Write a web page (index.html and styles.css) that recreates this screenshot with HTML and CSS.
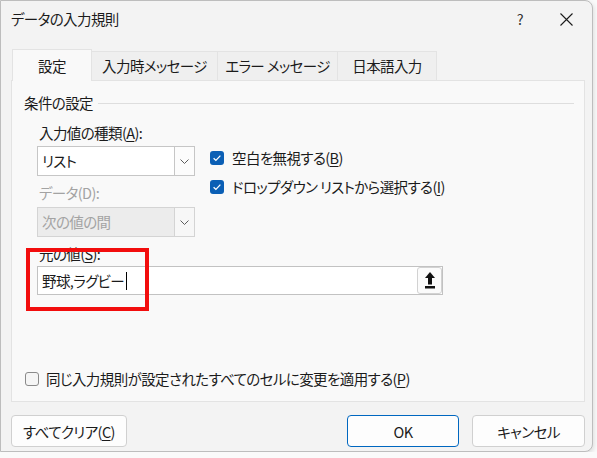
FILE: index.html
```html
<!DOCTYPE html>
<html lang="ja">
<head>
    <meta charset="UTF-8">
    <meta name="viewport" content="width=device-width, initial-scale=1.0">
    <title>データの入力規則</title>
    <link rel="stylesheet" href="styles.css">
</head>
<body>
    <div class="dialog">
        <div class="titlebar">
            <span class="title">データの入力規則</span>
            <span class="help">?</span>
            <span class="close">
                <svg width="13" height="13" viewBox="0 0 13 13"><path d="M0.5 0.5 L12.5 12.5 M12.5 0.5 L0.5 12.5" stroke="#1b1b1b" stroke-width="1.1" fill="none"/></svg>
            </span>
        </div>

        <div class="content">
            <div class="tabs">
                <div class="tab tab-settings active">設定</div>
                <div class="tab tab-input">入力時メッセージ</div>
                <div class="tab tab-error">エラー メッセージ</div>
                <div class="tab tab-ime">日本語入力</div>
            </div>

            <div class="panel">
                <div class="group-title">
                    <span>条件の設定</span>
                    <span class="rule"></span>
                </div>

                <div class="criteria">
                    <div class="label label-type">入力値の種類(<u>A</u>):</div>
                    <div class="criteria-row">
                        <div class="criteria-left">
                            <div class="combo">
                                <span class="combo-value">リスト</span>
                                <span class="combo-btn">
                                    <svg width="9" height="5" viewBox="0 0 9 5"><path d="M0.5 0.5 L4.5 4.5 L8.5 0.5" stroke="#5c5c5c" stroke-width="1" fill="none"/></svg>
                                </span>
                            </div>
                            <div class="label label-data disabled">データ(D):</div>
                            <div class="combo disabled">
                                <span class="combo-value">次の値の間</span>
                                <span class="combo-btn">
                                    <svg width="9" height="5" viewBox="0 0 9 5"><path d="M0.5 0.5 L4.5 4.5 L8.5 0.5" stroke="#5c5c5c" stroke-width="1" fill="none"/></svg>
                                </span>
                            </div>
                        </div>
                        <div class="options">
                            <div class="check">
                                <span class="box checked">
                                    <svg width="14" height="14" viewBox="0 0 14 14"><path d="M3.6 7.2 L5.9 9.4 L10.4 4.6" stroke="#fff" stroke-width="1.3" fill="none"/></svg>
                                </span>
                                <span>空白を無視する(<u>B</u>)</span>
                            </div>
                            <div class="check">
                                <span class="box checked">
                                    <svg width="14" height="14" viewBox="0 0 14 14"><path d="M3.6 7.2 L5.9 9.4 L10.4 4.6" stroke="#fff" stroke-width="1.3" fill="none"/></svg>
                                </span>
                                <span>ドロップダウン リストから選択する(<u>I</u>)</span>
                            </div>
                        </div>
                    </div>

                    <div class="label label-source">元の値(<u>S</u>):</div>
                    <div class="source">
                        <span class="source-text">野球,ラグビー</span><span class="caret"></span>
                        <span class="collapse-btn">
                            <svg width="10" height="17" viewBox="0 0 10 17">
                                <polygon points="5,0 10,6 0,6" fill="#111"/>
                                <rect x="3" y="5.5" width="4" height="7" fill="#111"/>
                                <rect x="0" y="14" width="10" height="2.5" fill="#111"/>
                            </svg>
                        </span>
                    </div>
                </div>

                <div class="check apply">
                    <span class="box"></span>
                    <span>同じ入力規則が設定されたすべてのセルに変更を適用する(<u>P</u>)</span>
                </div>
            </div>

            <div class="footer">
                <button type="button" class="btn btn-clear">すべてクリア(<u>C</u>)</button>
                <button type="button" class="btn btn-ok">OK</button>
                <button type="button" class="btn btn-cancel">キャンセル</button>
            </div>
        </div>

        <div class="highlight"></div>
    </div>
</body>
</html>
```

FILE: styles.css
```css
body {
    margin: 0;
    background-color: #fafafa;
    font-family: "Noto Sans CJK JP", "Noto Sans", sans-serif;
    font-feature-settings: "palt";
    font-size: 14.5px;
    letter-spacing: -0.6px;
    color: #1b1b1b;
    overflow: hidden;
}

u {
    text-decoration-thickness: 1px;
    text-underline-offset: 2px;
}

.dialog {
    position: relative;
    width: 593px;
    height: 452px;
    box-sizing: border-box;
    border: 1px solid #bdbdbd;
    border-radius: 0 8px 8px 0;
    background-color: #f3f3f3;
    box-shadow: 1px 2px 5px rgba(0, 0, 0, 0.12);
    display: flex;
    flex-direction: column;
}

/* title bar */
.titlebar {
    height: 36px;
    display: flex;
    align-items: center;
    padding-left: 10px;
    line-height: 20px;
}

.title {
    flex: 1;
}

.help {
    width: 46px;
    text-align: center;
    color: #333;
}

.close {
    width: 46px;
    margin-right: 3px;
    display: flex;
    justify-content: center;
}

.content {
    flex: 1;
    padding: 0 7px 0 10px;
    display: flex;
    flex-direction: column;
}

/* tabs */
.tabs {
    margin-top: 12px;
    margin-left: 1px;
    height: 31px;
    display: flex;
    align-items: flex-end;
}

.tab {
    height: 29px;
    box-sizing: border-box;
    border: 1px solid #e3e3e3;
    border-bottom: none;
    margin-left: -1px;
    background-color: #efefef;
    line-height: 27px;
    text-align: center;
    white-space: nowrap;
}

.tab.active {
    position: relative;
    z-index: 1;
    height: 32px;
    margin-left: 0;
    margin-bottom: -1px;
    background-color: #f9f9f9;
    line-height: 32px;
}

.tab-settings { width: 80px; }
.tab-input { width: 127px; }
.tab-error { width: 121px; }
.tab-ime { width: 100px; }

/* settings panel */
.panel {
    height: 322px;
    box-sizing: border-box;
    border: 1px solid #e3e3e3;
    background-color: #f9f9f9;
    padding: 12px 10px 12px 12px;
    display: flex;
    flex-direction: column;
}

.group-title {
    display: flex;
    align-items: center;
    line-height: 20px;
}

.rule {
    flex: 1;
    height: 1px;
    margin-left: 5px;
    background-color: #dedede;
}

.criteria {
    margin-left: 13px;
}

.label {
    line-height: 20px;
    padding-left: 2px;
}

.label.disabled {
    color: #a3a3a3;
}

.label-type {
    margin-top: 10px;
    margin-bottom: 3px;
}

.label-data {
    margin-top: 7px;
    margin-bottom: 4px;
}

.label-source {
    margin-top: 7px;
    margin-bottom: 2px;
}

.criteria-row {
    display: flex;
}

.criteria-left {
    width: 158px;
}

.combo {
    height: 30px;
    box-sizing: border-box;
    border: 1px solid #c6c6c6;
    background-color: #fff;
    display: flex;
}

.combo-value {
    flex: 1;
    padding-left: 4px;
    line-height: 28px;
}

.combo-btn {
    width: 19px;
    border-left: 1px solid #c6c6c6;
    background-color: #fcfcfc;
    display: flex;
    align-items: center;
    justify-content: center;
}

.combo.disabled {
    border-color: #d4d4d4;
    background-color: #ececec;
    color: #a3a3a3;
}

.combo.disabled .combo-btn {
    border-left-color: #d4d4d4;
    background-color: #f7f7f7;
}

.options {
    margin-left: 15px;
    padding-top: 2px;
    display: flex;
    flex-direction: column;
    gap: 9px;
}

.check {
    display: flex;
    align-items: center;
    gap: 8px;
    line-height: 20px;
    white-space: nowrap;
}

.box {
    width: 14px;
    height: 14px;
    box-sizing: border-box;
    border: 1px solid #8a8a8a;
    border-radius: 3px;
    background-color: #f5f5f5;
    display: flex;
}

.box.checked {
    border: none;
    background-color: #0b5fb5;
}

.source {
    width: 406px;
    height: 29px;
    box-sizing: border-box;
    border: 1px solid #c2c2c2;
    background-color: #fff;
    display: flex;
    align-items: center;
    padding-left: 4px;
}

.source-text {
    line-height: 20px;
}

.caret {
    width: 1px;
    height: 18px;
    margin-left: 2px;
    background-color: #000;
}

.collapse-btn {
    margin-left: auto;
    width: 25px;
    height: 27px;
    box-sizing: border-box;
    border: 1px solid #d2d2d2;
    border-radius: 3px;
    background-color: #fbfbfb;
    display: flex;
    align-items: center;
    justify-content: center;
}

.apply {
    margin-top: auto;
    margin-left: 1px;
    gap: 7px;
}

/* bottom buttons */
.footer {
    margin-top: 13px;
    display: flex;
    gap: 13px;
}

.btn {
    height: 32px;
    box-sizing: border-box;
    border: 1px solid #d0d0d0;
    border-radius: 4px;
    background-color: #fdfdfd;
    font-family: inherit;
    font-feature-settings: "palt";
    font-size: 14.5px;
    letter-spacing: -0.6px;
    color: #1b1b1b;
    padding: 0;
}

.btn-clear {
    width: 116px;
}

.btn-ok {
    width: 112px;
    margin-left: auto;
    border-color: #0067c0;
}

.btn-cancel {
    width: 113px;
}

/* red marker around the source value */
.highlight {
    position: absolute;
    left: 25px;
    top: 247px;
    width: 123px;
    height: 63px;
    box-sizing: border-box;
    border: 4px solid #f20d0d;
}
```
